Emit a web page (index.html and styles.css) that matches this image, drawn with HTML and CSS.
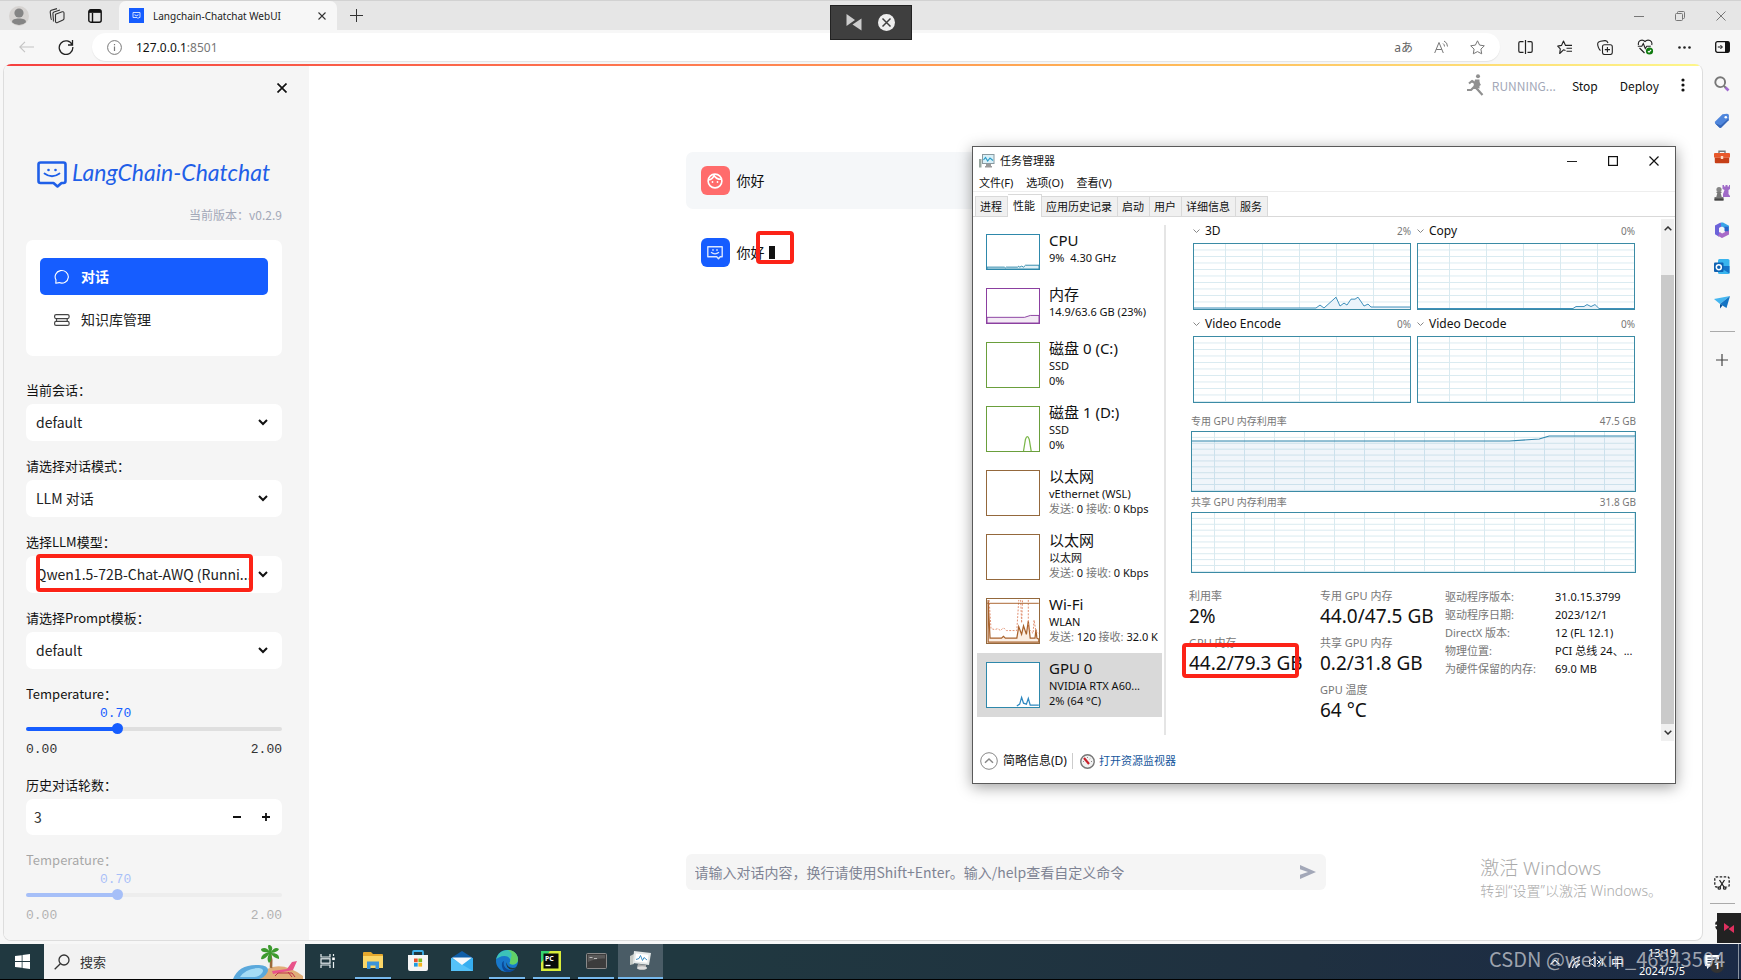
FILE: index.html
```html
<!DOCTYPE html>
<html lang="zh-CN">
<head>
<meta charset="utf-8">
<title>Langchain-Chatchat WebUI</title>
<link rel="stylesheet" href="styles.css">
</head>
<body>
<div class="desktop">
  <header class="tabbar">
    <button class="icon-btn tool-slot" aria-label="Profile"><svg width="20" height="20" viewBox="0 0 20 20"><circle cx="10" cy="10" r="10" fill="#d6d3d1"/><circle cx="10" cy="7" r="4.6" fill="#858585"/><path d="M3 16.2c0-3 3-3.7 7-3.7s7 .7 7 3.7a10 10 0 0 1-14 0z" fill="#858585"/></svg></button>
    <button class="icon-btn tool-slot" aria-label="Workspaces"><svg width="16" height="16" viewBox="0 0 16 16" fill="none" stroke="#333" stroke-width="1.1" stroke-linejoin="round"><path d="M6.5 6.2 13.2 3.8c1-.3 1.8.2 1.8 1.200v5.600c0 .7-.3 1.200-1 1.500L8.500 14.600c-1 .4-2-.1-2-1.100z"/><path d="M4.500 12.600 3.900 5.600c0-.8.4-1.300 1.100-1.600L11 1.900M2 10.800 1.200 3.900c0-.8.4-1.300 1.100-1.600L8 .6M5 13.200l-1-.6M2.700 11.600 2 10.800"/></svg></button>
    <button class="icon-btn tool-slot" aria-label="Tab actions"><svg width="14" height="14" viewBox="0 0 14 14" fill="none" stroke="#111" stroke-width="1.4"><rect x=".8" y=".8" width="12.400" height="12.400" rx="2"/><path d="M1 2.500h12M4.500 4v9"/><path d="M1 2.300h12" stroke-width="3"/></svg></button>
    <div class="tab">
      <svg width="15" height="15" viewBox="0 0 15 15"><rect width="15" height="15" fill="#165dff"/><path d="M4 4.500h7v5H9.800l-.8 1-.8-1H4z" fill="none" stroke="#cfe0ff"/><path d="M5.500 6.800q2 1.800 4 0" fill="none" stroke="#fff" stroke-width=".9"/></svg>
      <span class="tab-title">Langchain-Chatchat WebUI</span>
      <button class="icon-btn" aria-label="Close tab"><svg width="8" height="8" viewBox="0 0 8 8" stroke="#333" stroke-width="1.100"><path d="M.5.500l7 7M7.500.500l-7 7"/></svg></button>
    </div>
    <button class="icon-btn new-tab" aria-label="New tab"><svg width="13" height="13" viewBox="0 0 13 13" stroke="#333"><path d="M6.500 0v13M0 6.500h13"/></svg></button>
    <div class="win-controls">
      <button class="icon-btn" aria-label="Minimize"><svg width="10" height="10" viewBox="0 0 10 10" stroke="#777"><path d="M0 5.500h10"/></svg></button>
      <button class="icon-btn" aria-label="Restore"><svg width="10" height="10" viewBox="0 0 10 10" fill="none" stroke="#777"><rect x=".5" y="2.500" width="7" height="7" rx="1"/><path d="M2.500 2.500v-1q0-1 1-1h5q1 0 1 1v5q0 1-1 1h-1"/></svg></button>
      <button class="icon-btn" aria-label="Close"><svg width="10" height="10" viewBox="0 0 10 10" stroke="#777"><path d="M.5.500l9 9M9.500.500l-9 9"/></svg></button>
    </div>
  </header>

  <div class="float-bar">
    <button class="icon-btn" aria-label="Remote"><svg width="16" height="17" viewBox="0 0 16 17" fill="#ccc"><path d="M.5 0v12L9 6z"/><path d="M15.500 4.500v12L6.500 10.500z"/></svg></button>
    <button class="icon-btn" aria-label="Disconnect"><svg width="17" height="17" viewBox="0 0 17 17"><circle cx="8.500" cy="8.500" r="8.500" fill="#eee"/><path d="M4.500 4.500l8 8M12.500 4.500l-8 8" stroke="#3f3f3f" stroke-width="1.500"/></svg></button>
  </div>

  <nav class="toolbar">
    <button class="icon-btn nav-slot" aria-label="Back"><svg width="15" height="12" viewBox="0 0 15 12" fill="none" stroke="#c4c4c4" stroke-width="1.100"><path d="M15 6H1M6 .8.800 6 6 11.200"/></svg></button>
    <button class="icon-btn nav-slot" aria-label="Reload"><svg width="16" height="16" viewBox="0 0 16 16" fill="none" stroke="#222" stroke-width="1.300"><path d="M14.300 6A6.800 6.800 0 1 0 14.800 8M14.500 1v5H10"/></svg></button>
    <div class="address">
      <svg width="15" height="15" viewBox="0 0 15 15" fill="none" stroke="#777"><circle cx="7.500" cy="7.500" r="6.900"/><path d="M7.500 6.500v4.500M7.500 4v1.300" stroke-width="1.200"/></svg>
      <span class="url">127.0.0.1<span class="port">:8501</span></span>
      <span class="address-actions">
        <span class="translate">aあ</span>
        <svg width="15" height="14" viewBox="0 0 15 14" fill="none" stroke="#777"><path d="M.7 13 5 2.500 9.300 13M2.200 9.500h5.600M9 3.500q1.500 1 1.500 3M10 1q3.500 1.500 3.500 5.500" /></svg>
        <svg width="15" height="15" viewBox="0 0 15 15" fill="none" stroke="#777" stroke-linejoin="round"><path d="M7.500.8l2.100 4.300 4.700.7-3.400 3.300.8 4.700-4.200-2.200-4.200 2.200.8-4.700L.7 5.800l4.700-.7z"/></svg>
      </span>
    </div>
    <div class="tool-icons">
      <svg width="15" height="14" viewBox="0 0 15 14" fill="none" stroke="#222" stroke-width="1.200"><path d="M5.500 1.600H2.200Q.8 1.600.8 3v8q0 1.400 1.400 1.400h3.300M9.500 1.600h3.300q1.400 0 1.400 1.400v8q0 1.400-1.400 1.400H9.500M7.500 0v14"/></svg>
      <svg width="16" height="15" viewBox="0 0 16 15" fill="none" stroke="#222" stroke-width="1.100" stroke-linejoin="round"><path d="M8.500 10.500 6.500 9.800l-3.800 3.700.6-4.600L.7 6.100l3.800-.7L6.500 1l2 4.400H15M9.500 8.300H15M9.500 11.200H15"/></svg>
      <svg width="16" height="15" viewBox="0 0 16 15" fill="none" stroke="#222" stroke-width="1.100"><rect x="5.500" y="4.800" width="9.800" height="9.700" rx="2"/><path d="M10.400 7v5.200M7.800 9.600H13M3.500 10.500C1.800 9.500.500 5.500.7 3.400.8 2 2 1.500 3.500 1.200L8 .6c1.800-.1 2.500.7 3 2.400"/></svg>
      <svg width="17" height="16" viewBox="0 0 17 16" fill="none" stroke="#222" stroke-width="1.100"><path d="M1.500 6C.5 1.800 5-.4 8 2.500 11-.4 16 1.800 14.700 6M2.500 9l5 5M.8 7.300h4l1.500-2.800 2 5 1.500-2.200h4"/><circle cx="12.500" cy="12" r="3.600" fill="#0f7b0f" stroke="none"/><path d="M10.900 12l1.100 1.200 2.100-2.400" stroke="#fff"/></svg>
      <svg width="13" height="3" viewBox="0 0 13 3" fill="#222"><circle cx="1.500" cy="1.500" r="1.300"/><circle cx="6.500" cy="1.500" r="1.300"/><circle cx="11.500" cy="1.500" r="1.300"/></svg>
      <svg width="15" height="12" viewBox="0 0 15 12"><rect x=".7" y=".7" width="13.600" height="10.600" rx="1.800" fill="none" stroke="#111" stroke-width="1.300"/><path d="M10 .5h3q1.500 0 1.500 1.500v8q0 1.500-1.500 1.500h-3z" fill="#111"/><path d="M2.800 6h4.400M5.400 4l2 2-2 2" fill="none" stroke="#111"/></svg>
    </div>
  </nav>

  <div class="workspace">
    <div class="page">
      <aside class="sidebar">
        <div class="sidebar-close"><button class="icon-btn" aria-label="Close sidebar"><svg width="10" height="10" viewBox="0 0 10 10" stroke="#111" stroke-width="1.700"><path d="M.5.500l9 9M9.500.500l-9 9"/></svg></button></div>
        <div class="logo">
          <svg width="30" height="27" viewBox="0 0 30 27" fill="none" stroke="#1f5fe8" stroke-width="2.600" stroke-linejoin="round"><path d="M3.500 1.500h23q2 0 2 2V20q0 2-2 2h-2l-4 3.500-4-3.500H3.500q-2 0-2-2V3.500q0-2 2-2z"/><path d="M7.500 12.500q7.500 5.500 15 0" stroke-width="1.800" stroke-linecap="round"/><circle cx="11.500" cy="9" r="1.300" fill="#1f5fe8" stroke="none"/><circle cx="18.500" cy="9" r="1.300" fill="#1f5fe8" stroke="none"/></svg>
          <span class="logo-text">LangChain-Chatchat</span>
        </div>
        <p class="version">当前版本：v0.2.9</p>
        <div class="menu-card">
          <button class="menu-item active"><svg width="16" height="16" viewBox="0 0 16 16" fill="none" stroke="#fff" stroke-width="1.100"><path d="M1.800 14.300 2 10.900a6.600 6.300 0 1 1 3.200 2.700z" stroke-linejoin="round"/></svg><span>对话</span></button>
          <button class="menu-item"><svg width="16" height="12" viewBox="0 0 16 12" fill="none" stroke="#444" stroke-width="1.200"><rect x=".6" y=".6" width="14.500" height="4" rx="1.500"/><rect x=".6" y="7.400" width="14.500" height="4" rx="1.500"/><path d="M2.500 4.600v2.800M13.200 4.600v2.800"/></svg><span>知识库管理</span></button>
        </div>
        <div class="fields">
          <div class="field"><label for="s1">当前会话：</label><div class="select"><select id="s1"><option>default</option></select><svg width="10" height="7" viewBox="0 0 10 7"><path d="M1 1l4 4 4-4" fill="none" stroke="#111" stroke-width="2"/></svg></div></div>
          <div class="field"><label for="s2">请选择对话模式：</label><div class="select"><select id="s2"><option>LLM 对话</option></select><svg width="10" height="7" viewBox="0 0 10 7"><path d="M1 1l4 4 4-4" fill="none" stroke="#111" stroke-width="2"/></svg></div></div>
          <div class="field"><label for="s3">选择LLM模型：</label><div class="select"><select id="s3"><option>Qwen1.5-72B-Chat-AWQ (Runni...</option></select><svg width="10" height="7" viewBox="0 0 10 7"><path d="M1 1l4 4 4-4" fill="none" stroke="#111" stroke-width="2"/></svg><span class="mark mark-model"></span></div></div>
          <div class="field"><label for="s4">请选择Prompt模板：</label><div class="select"><select id="s4"><option>default</option></select><svg width="10" height="7" viewBox="0 0 10 7"><path d="M1 1l4 4 4-4" fill="none" stroke="#111" stroke-width="2"/></svg></div></div>
          <div class="field"><label for="r1">Temperature：</label><output class="slider-value" for="r1">0.70</output><input id="r1" type="range" min="0" max="2" step="0.01" value="0.7"><div class="ticks"><span>0.00</span><span>2.00</span></div></div>
          <div class="field"><label for="n1">历史对话轮数：</label><div class="number"><input id="n1" type="text" value="3"><button class="icon-btn" aria-label="Decrease"><svg width="8" height="8" viewBox="0 0 8 8" stroke="#111" stroke-width="1.800"><path d="M0 4h8"/></svg></button><button class="icon-btn" aria-label="Increase"><svg width="8" height="8" viewBox="0 0 8 8" stroke="#111" stroke-width="1.800"><path d="M0 4h8M4 0v8"/></svg></button></div></div>
          <div class="field stale"><label for="r2">Temperature：</label><output class="slider-value" for="r2">0.70</output><input id="r2" type="range" min="0" max="2" step="0.01" value="0.7"><div class="ticks"><span>0.00</span><span>2.00</span></div></div>
        </div>
      </aside>

      <main class="main">
        <div class="status">
          <svg width="17" height="22" viewBox="0 0 17 22" fill="none" stroke="#909090" stroke-width="2.200"><circle cx="11" cy="2.300" r="2" fill="#909090" stroke="none"/><path d="M10.500 7 13 11.500M2 9.500 5 7l7 5M7 13l-3 3H0M7 12l6 6M11 16l4.500 5" stroke-linejoin="round"/><path d="M8 5.500h4.500v9L6 14z" fill="#909090" stroke="none"/></svg>
          <span class="running">RUNNING...</span>
          <button class="text-btn">Stop</button>
          <button class="text-btn">Deploy</button>
          <button class="icon-btn" aria-label="Menu"><svg width="4" height="14" viewBox="0 0 4 14" fill="#111"><circle cx="2" cy="2" r="1.600"/><circle cx="2" cy="7" r="1.600"/><circle cx="2" cy="12" r="1.600"/></svg></button>
        </div>
        <div class="chat">
          <div class="message user">
            <span class="avatar"><svg width="16" height="16" viewBox="0 0 16 16" fill="none" stroke="#fff" stroke-width="1.600"><circle cx="8" cy="8" r="6.900"/><path d="M1.500 7Q5.500 6.500 7 2.500q2.500 4 7.500 3.800"/><circle cx="5.500" cy="9" r=".9" fill="#fff" stroke="none"/><circle cx="10.500" cy="9" r=".9" fill="#fff" stroke="none"/></svg></span>
            <p>你好</p>
          </div>
          <div class="message bot">
            <span class="avatar"><svg width="16" height="14" viewBox="0 0 16 14" fill="none" stroke="#dbe7ff" stroke-width="1.400" stroke-linejoin="round"><path d="M.8.800h14.400v10h-2l-1.700 2-1.800-2H.800z"/><path d="M4 6.300q4 3 8 0" stroke-width="1.300"/><path d="M5.200 4h1.600M9.200 4h1.600"/></svg></span>
            <p>你好<span class="caret"></span><span class="mark mark-reply"></span></p>
          </div>
        </div>
        <form class="composer">
          <input type="text" aria-label="对话" placeholder="请输入对话内容，换行请使用Shift+Enter。输入/help查看自定义命令">
          <button class="icon-btn" type="button" aria-label="Send"><svg width="16" height="14" viewBox="0 0 16 14" fill="#a3a8b8"><path d="M0 0 16 7 0 14V9.800L8 7 0 4.200z"/></svg></button>
        </form>
        <div class="activate"><p class="activate-title">激活 Windows</p><p>转到“设置”以激活 Windows。</p></div>
      </main>
    </div>

    <aside class="edge-bar">
      <svg width="16" height="16" viewBox="0 0 16 16" fill="none"><circle cx="6.200" cy="6.200" r="4.900" stroke="#777" stroke-width="1.900"/><path d="M10 10l2 2" stroke="#777" stroke-width="2"/><path d="M11.500 11.500l3 3" stroke="#a06bd0" stroke-width="2.600"/></svg>
      <svg width="16" height="16" viewBox="0 0 16 16"><path d="M8.500 1.200 13 .8q2 0 2 2l-.4 4.500-7.300 7.300q-1 .8-2 0L1.200 10.500q-.8-1 0-2z" fill="#4f86dc"/><path d="M1.200 10.500l4.100 4.100q1 .8 2 0l7.300-7.300.2-2-8 7z" fill="#3767b8"/><circle cx="11.800" cy="4.200" r="1.300" fill="#fff"/></svg>
      <svg width="16" height="14" viewBox="0 0 16 14"><path d="M5 3V1.200h6V3" fill="none" stroke="#777" stroke-width="1.400"/><rect y="3" width="16" height="4.800" rx="1" fill="#e8582a"/><path d="M.8 7.800h14.400v4.500q0 1-1 1H1.800q-1 0-1-1z" fill="#c63f17"/><rect x="6.800" y="6" width="2.400" height="3" fill="#ffd9c0"/></svg>
      <svg width="16" height="16" viewBox="0 0 16 16"><path d="M8.500 0H10v1.500h1.500V0h2v1.500H15V0h1v4l-1.500 1v4l1.500 2v1H9V9l1.500-4-2-1z" fill="#a06bc8"/><circle cx="5" cy="4.500" r="2.600" fill="#858585"/><path d="M2.500 6.800h5V8H6.700l1 4H9.500v3.500H.5V12h1.800l1-4h-.8z" fill="#777"/><path d="M.5 13.500h9v2h-9z" fill="#444"/></svg>
      <svg width="16" height="16" viewBox="0 0 16 16" fill="none" stroke-width="4"><path d="M7.500 2.300 3 4.800v6.400l3 1.800" stroke="#6c63d9"/><path d="M7 2.400h1.500L13 5v4" stroke="#3aa5e8"/><path d="M13 8v3.200l-5 2.600-3-1.700" stroke="#a86ac8"/><path d="M12.500 4.700v4.500" stroke="#2c62c8"/></svg>
      <svg width="16" height="16" viewBox="0 0 16 16"><rect x="4" width="11.500" height="15" rx="1.500" fill="#38b4ee"/><path d="M4 7h11.500v7.500L10 11z" fill="#1474c8"/><rect y="3.500" width="9.500" height="9.500" rx="1" fill="#0f62b2"/><circle cx="4.800" cy="8.200" r="2.500" fill="none" stroke="#fff" stroke-width="1.500"/></svg>
      <svg width="16" height="13" viewBox="0 0 16 13"><path d="M0 3 16 0 6 8z" fill="#45b6f0"/><path d="M16 0 12.500 12 6 8z" fill="#1474c4"/><path d="M6 8v4.500L8.500 9.500z" fill="#0b4f94"/></svg>
      <hr>
      <button class="icon-btn" aria-label="Customize"><svg width="12" height="12" viewBox="0 0 12 12" stroke="#444" stroke-width="1.200"><path d="M6 0v12M0 6h12"/></svg></button>
      <span class="edge-bottom">
        <svg width="16" height="14" viewBox="0 0 16 14" fill="none" stroke="#222" stroke-width="1.300"><path d="M3.500 11H3Q.8 11 .8 9V3Q.8.800 3 .8h10q2.200 0 2.200 2.200v6q0 2-2.200 2h-.5" stroke-dasharray="2.500 1.500"/><path d="M5.500 4l4.500 7M10.500 4 6 11"/><circle cx="5.300" cy="12" r="1.200"/><circle cx="10.700" cy="12" r="1.200"/></svg>
        <hr>
        <svg width="16" height="16" viewBox="0 0 16 16" fill="none" stroke="#222"><circle cx="8" cy="8" r="6" stroke-width="2" stroke-dasharray="3 1.700"/><circle cx="8" cy="8" r="2.500"/></svg>
      </span>
      <span class="remote-badge"><svg width="10" height="10" viewBox="0 0 10 10" fill="#e0305f"><path d="M0 0v8l5.500-4z"/><path d="M10 2v8L4.500 6z"/></svg></span>
    </aside>
  </div>

  <section class="taskman" aria-label="任务管理器">
    <header class="tm-title">
      <svg width="16" height="14" viewBox="0 0 16 14"><rect x="3.500" y=".5" width="11.500" height="9" fill="#d8f0f8" stroke="#8a9aa0"/><path d="M4.500 6l2-2.500 2.200 3.500L11 4l3 2.500" fill="none" stroke="#2a9cc8" stroke-width="1.200"/><path d="M7 10h5v2H7zM6 12h7v1.500H6z" fill="#9a9a9a"/><path d="M0 5h2.500v8.500H0z" fill="#99a8a0"/></svg>
      <h1>任务管理器</h1>
      <div class="tm-controls">
        <button class="icon-btn" aria-label="Minimize"><svg width="10" height="10" viewBox="0 0 10 10" stroke="#222"><path d="M0 5.500h10"/></svg></button>
        <button class="icon-btn" aria-label="Maximize"><svg width="10" height="10" viewBox="0 0 10 10" fill="none" stroke="#111" stroke-width="1.200"><rect x=".6" y=".6" width="8.800" height="8.800"/></svg></button>
        <button class="icon-btn" aria-label="Close"><svg width="10" height="10" viewBox="0 0 10 10" stroke="#111" stroke-width="1.200"><path d="M.5.500l9 9M9.500.500l-9 9"/></svg></button>
      </div>
    </header>
    <div class="tm-menu"><button>文件(F)</button><button>选项(O)</button><button>查看(V)</button></div>
    <div class="tm-tabs"><button>进程</button><button class="current">性能</button><button>应用历史记录</button><button>启动</button><button>用户</button><button>详细信息</button><button>服务</button></div>
    <div class="tm-body">
      <ul class="tm-list">
        <li class="short"><svg class="thumb cpu" viewBox="0 0 54 36" preserveAspectRatio="none"><path d="M0 34H18l1 1 1-1h12l1-1 1 1 2-1 2 1 2-2h14v4H0z" fill="#e3f1f7" stroke="#2e88ab"/></svg><div><h2>CPU</h2><p>9% &nbsp;4.30 GHz</p></div></li>
        <li class="short"><svg class="thumb mem" viewBox="0 0 54 36" preserveAspectRatio="none"><path d="M0 30H39l6-2h9v8H0z" fill="#f3eaf5" stroke="#8b3fa0"/></svg><div><h2>内存</h2><p>14.9/63.6 GB (23%)</p></div></li>
        <li><svg class="thumb disk" viewBox="0 0 54 46"></svg><div><h2>磁盘 0 (C:)</h2><p>SSD</p><p>0%</p></div></li>
        <li><svg class="thumb disk" viewBox="0 0 54 46"><path d="M38 46l2-12q2-6 4 0l2 12" fill="none" stroke="#7ab648" stroke-width="1.300"/></svg><div><h2>磁盘 1 (D:)</h2><p>SSD</p><p>0%</p></div></li>
        <li><svg class="thumb net" viewBox="0 0 54 46"></svg><div><h2>以太网</h2><p>vEthernet (WSL)</p><p><span class="dim">发送:</span> 0 <span class="dim">接收:</span> 0 Kbps</p></div></li>
        <li><svg class="thumb net" viewBox="0 0 54 46"></svg><div><h2>以太网</h2><p>以太网</p><p><span class="dim">发送:</span> 0 <span class="dim">接收:</span> 0 Kbps</p></div></li>
        <li><svg class="thumb net" viewBox="0 0 54 46" fill="none"><path d="M1 1l2 40h12l2-2 2 2h12l2-12 3 8 2-9 3 9 2-14 2 18h5l1-9 1 9 2 1v3H1z" fill="#fbeee3" stroke="#a8622c" stroke-width="1.300"/><path d="M2 1l2 30 4 1 3-1 3 2 3-3 3 3h11L33 1M35 1l1 24L37 1M43 1v30l5 5 1-14 2 12 3 2" stroke="#e08a6a" stroke-dasharray="2 1.500"/><path d="M0 4.500h54" stroke="#a8622c"/></svg><div><h2>Wi-Fi</h2><p>WLAN</p><p><span class="dim">发送:</span> 120 <span class="dim">接收:</span> 32.0 K</p></div></li>
        <li class="selected"><svg class="thumb cpu" viewBox="0 0 54 46"><path d="M31 45l3-2 2-7 2 6 3 1 2-6 2 7h9" fill="none" stroke="#2e88c0" stroke-width="1.300"/></svg><div><h2>GPU 0</h2><p>NVIDIA RTX A60...</p><p>2% (64 °C)</p></div></li>
      </ul>
      <div class="tm-detail">
        <div class="engines">
          <div class="engine"><button class="engine-name"><svg width="7" height="4" viewBox="0 0 7 4"><path d="M.5.500l3 3 3-3" fill="none" stroke="#888"/></svg>3D</button><span class="pct">2%</span><div class="graph"><svg viewBox="0 0 216 66" preserveAspectRatio="none"><path d="M-1 65H122l4-3 4 3L142 54l4 9 4-3 3 2 4-6h4l3-2 6 9 4-2 3 3H217V67H-1z" fill="#eaf3fa" stroke="#3d8fba"/></svg></div></div>
          <div class="engine"><button class="engine-name"><svg width="7" height="4" viewBox="0 0 7 4"><path d="M.5.500l3 3 3-3" fill="none" stroke="#888"/></svg>Copy</button><span class="pct">0%</span><div class="graph"><svg viewBox="0 0 216 66" preserveAspectRatio="none"><path d="M0 65.500h155l3-2h8l3-2 4 2 4-2 4 4h35" fill="#eaf3fa" stroke="#3d8fba"/></svg></div></div>
          <div class="engine"><button class="engine-name"><svg width="7" height="4" viewBox="0 0 7 4"><path d="M.5.500l3 3 3-3" fill="none" stroke="#888"/></svg>Video Encode</button><span class="pct">0%</span><div class="graph"></div></div>
          <div class="engine"><button class="engine-name"><svg width="7" height="4" viewBox="0 0 7 4"><path d="M.5.500l3 3 3-3" fill="none" stroke="#888"/></svg>Video Decode</button><span class="pct">0%</span><div class="graph"></div></div>
        </div>
        <div class="memory">
          <div class="mem-head"><span>专用 GPU 内存利用率</span><span>47.5 GB</span></div>
          <div class="graph wide"><svg viewBox="0 0 444 59" preserveAspectRatio="none"><path d="M-1 9H318l30-2 10-3h87v60H-1z" fill="rgba(40,120,190,.07)" stroke="#2f86ac" stroke-width="1.200"/></svg></div>
          <div class="mem-head"><span>共享 GPU 内存利用率</span><span>31.8 GB</span></div>
          <div class="graph wide"></div>
        </div>
        <div class="stats">
          <dl class="big"><dt>利用率</dt><dd>2%</dd><dt>GPU 内存</dt><dd>44.2/79.3 GB<span class="mark mark-mem"></span></dd></dl>
          <dl class="big"><dt>专用 GPU 内存</dt><dd>44.0/47.5 GB</dd><dt>共享 GPU 内存</dt><dd>0.2/31.8 GB</dd><dt>GPU 温度</dt><dd>64 °C</dd></dl>
          <table class="props"><tbody>
            <tr><th>驱动程序版本:</th><td>31.0.15.3799</td></tr>
            <tr><th>驱动程序日期:</th><td>2023/12/1</td></tr>
            <tr><th>DirectX 版本:</th><td>12 (FL 12.1)</td></tr>
            <tr><th>物理位置:</th><td>PCI 总线 24、...</td></tr>
            <tr><th>为硬件保留的内存:</th><td>69.0 MB</td></tr>
          </tbody></table>
        </div>
      </div>
      <div class="scroll"><svg width="8" height="5" viewBox="0 0 8 5"><path d="M.7 4.300 4 1l3.300 3.300" fill="none" stroke="#333" stroke-width="1.500"/></svg><span class="scroll-thumb"></span><svg width="8" height="5" viewBox="0 0 8 5"><path d="M.7.700 4 4 7.300.700" fill="none" stroke="#333" stroke-width="1.500"/></svg></div>
    </div>
    <footer class="tm-foot">
      <button class="brief"><svg width="18" height="18" viewBox="0 0 18 18" fill="none" stroke="#888"><circle cx="9" cy="9" r="8.300"/><path d="M5 10.800 9 7l4 3.800" stroke-width="1.500"/></svg>简略信息(D)</button>
      <a href="#"><svg width="15" height="15" viewBox="0 0 15 15"><circle cx="7.500" cy="7.500" r="6.700" fill="#f2f2f2" stroke="#777" stroke-width="1.400"/><path d="M4 4l5 6" stroke="#c8202a" stroke-width="2.200"/><path d="M3 7.500h1M7.500 3v1M11 7.500h1M10.300 4.500l-.7.700" stroke="#888"/></svg>打开资源监视器</a>
    </footer>
  </section>

  <footer class="taskbar">
    <button class="start" aria-label="Start"><svg width="15" height="15" viewBox="0 0 15 15" fill="#fff"><path d="M0 2.100 6.700 1.200v5.900H0zM7.500 1.100 15 0v7.100H7.500zM0 7.900h6.700v5.900L0 12.900zM7.500 7.900H15V15l-7.500-1.100z"/></svg></button>
    <button class="search"><svg width="16" height="16" viewBox="0 0 16 16" fill="none" stroke="#333" stroke-width="1.300"><circle cx="10" cy="6" r="5"/><path d="M6.300 9.700.700 15.300"/></svg><span>搜索</span>
      <svg class="beach" width="70" height="34" viewBox="0 0 70 34"><path d="M22 34Q42 10 70 31v3z" fill="#e0ae78"/><path d="M0 34Q6 19 26 20q12 1 8 8-3 5-8 6z" fill="#5ba9dc"/><path d="M7 32q6-9 19-9 6 1 3 5-3 4-8 4z" fill="#a5dcf5"/><path d="M38 23q1-8-1-15" stroke="#9a6a3a" stroke-width="2.600" fill="none"/><path d="M37 8Q33-1 37 0q4 2 1 7 4-6 8-3-1 3-8 4 9 0 8 6-5-1-8-5 2 6-2 9-3-4 0-9-4 6-8 5 0-5 8-7-8 1-8-3 5-3 9 3z" fill="#3d9a2e"/><path d="M39 26l15-2 5-7 5-1-4 9-20 4z" fill="#e8538a"/><path d="M42 31l3-3 14 0 3 4M55 27l4 5" stroke="#c0304a" fill="none"/></svg>
    </button>
    <div class="apps">
    <button class="app" aria-label="Task view"><svg width="16" height="14" viewBox="0 0 16 14" fill="none" stroke="#e8eef0" stroke-width="1.200"><path d="M1 0v3h9V0M1 14v-3h9v3"/><rect x="1" y="4.800" width="9" height="4.400"/><path d="M13.500 0v2M13.500 8v6"/><path d="M12.200 3.500h2.600v2.600h-2.600z" fill="#fff" stroke="none"/></svg></button>
    <button class="app open" aria-label="Explorer"><svg width="20" height="17" viewBox="0 0 20 17"><path d="M0 1q0-1 1-1h7l2 2h9q1 0 1 1v12q0 1-1 1H1q-1 0-1-1z" fill="#e5a82d"/><path d="M0 4h20v12H0z" fill="#fbd667"/><path d="M4 9.500h12V17h-3.500v-3.500h-5V17H4z" fill="#3d94d8"/></svg></button>
    <button class="app" aria-label="Store"><svg width="22" height="22" viewBox="0 0 22 22"><path d="M6 6V2q0-1 1-1h8q1 0 1 1v4" fill="none" stroke="#3eb0ea" stroke-width="1.800"/><path d="M1 5h20v14q0 2-2 2H3q-2 0-2-2z" fill="#f5f5f5"/><path d="M7 8.500h3.700v3.700H7z" fill="#e8502a"/><path d="M11.400 8.500h3.700v3.700h-3.700z" fill="#7ab822"/><path d="M7 12.900h3.700v3.700H7z" fill="#1e9be0"/><path d="M11.400 12.900h3.700v3.700h-3.700z" fill="#f5b41e"/></svg></button>
    <button class="app" aria-label="Mail"><svg width="22" height="20" viewBox="0 0 22 20"><path d="M0 7 11 0l11 7z" fill="#0f5ea8"/><path d="M0 7h22v13H0z" fill="#36aef0"/><path d="M0 7v13h22z" fill="#55c2f8"/><path d="M1 6.500h20L11 14z" fill="#f4f8fb"/></svg></button>
    <button class="app open" aria-label="Edge"><svg width="22" height="22" viewBox="0 0 22 22"><circle cx="11" cy="11" r="11" fill="#1878ca"/><path d="M.2 9.500C1.500 3.500 6 0 11.500 0 18 0 22 4.500 22 9.500c0 3-2.500 5-5.500 5-2.500 0-3.500-1-2.500-2.500C15.500 8.500 12 6 8.500 6 4.500 6 1.500 8 .2 9.500z" fill="#3cc3b8"/><path d="M12 0c6 0 10 4.500 10 9.500 0 3-2.500 5-5.500 5-2.500 0-3.500-1-2.500-2.500C15 6 18 4 12 0z" fill="#62d066"/><path d="M8 11c-1.500 5 2 9 7 9 2 0 4-1 5-2-2 3-5 4-9 4C6 22 4 12 8 11z" fill="#0c4a98"/><path d="M20.500 17.300c-5 2.200-10.500-.5-9.500-5.300-2 4 1.500 8 6 7.500q2-.5 3.500-2.200z" fill="#203840"/></svg></button>
    <button class="app open" aria-label="PyCharm"><svg width="20" height="20" viewBox="0 0 20 20"><rect width="20" height="20" fill="#d9ec3a"/><path d="M0 0h9L0 12z" fill="#35d46f"/><rect x="2.500" y="2.500" width="15" height="15" fill="#0a0a0a"/><text x="4" y="10" class="pc">PC</text><path d="M4.500 14.500h5" stroke="#fff" stroke-width="1.300"/></svg></button>
    <button class="app open" aria-label="Terminal"><svg width="21" height="16" viewBox="0 0 21 16"><rect x=".5" y=".5" width="20" height="15" rx="1" fill="#3c3c3c" stroke="#8a8a8a"/><path d="M2 2h17v3.500Q10 5 2 9z" fill="#5a5a5a"/><path d="M3.500 4.500h3M8 5.500h3" stroke="#bbb"/></svg></button>
    <button class="app open focused" aria-label="Task Manager"><svg width="21" height="19" viewBox="0 0 21 19"><path d="M0 5l4-2v10l-4 1z" fill="#c4c8c4"/><path d="M4 0l17 2-2 12L3 12z" fill="#e4e8e8"/><path d="M6 2.500l12.500 1.300-1.300 8L5 10.300z" fill="#fff"/><path d="M6 8.500l3-1 1.500-3 2 5 1.500-3 3 2.500" stroke="#3b8fc4" fill="none"/><path d="M8 13l8 1v2H7z" fill="#aaa"/><ellipse cx="12" cy="17" rx="5" ry="1.800" fill="#ddd"/></svg></button>
    </div>
    <div class="tray">
      <svg width="10" height="6" viewBox="0 0 10 6" fill="none" stroke="#fff" stroke-width="1.200"><path d="M.5 5.500 5 1l4.500 4.500"/></svg>
      <svg width="13" height="12" viewBox="0 0 13 12" fill="none" stroke="#fff" stroke-width="1.200"><path d="M1 12Q2 3 12 1M4.500 12Q5 6 12 4.500M8 12q.5-3 4-3.800"/></svg>
      <svg width="14" height="12" viewBox="0 0 14 12" fill="none" stroke="#fff"><path d="M.5 4h2.500l3-3v10L3 8H.5zM8 4l4 4M12 4 8 8M13 2q1.500 4 0 8"/></svg>
      <span class="ime">中</span>
      <div class="clock"><span>13:19</span><span>2024/5/5</span></div>
      <span class="notice"><svg width="16" height="14" viewBox="0 0 16 14"><path d="M1 0h14v11H6l-3 3v-3H1z" fill="#fff"/><path d="M3.500 3h9M3.500 5.500h9M3.500 8h9" stroke="#1b2a44"/></svg><b>1</b></span>
      <span class="watermark">CSDN @weixin_46943504</span>
    </div>
  </footer>
</div>
</body>
</html>
```
FILE: styles.css
```css
* { box-sizing: border-box; }
body { margin: 0; font-family: "Noto Sans", "Noto Sans CJK SC", sans-serif; color: #111; }
p, h1, h2, ul, dl, dd { margin: 0; padding: 0; font-weight: 400; }
button, input, select { font: inherit; color: inherit; border: 0; background: none; padding: 0; margin: 0; }
svg { display: block; flex: none; }
.icon-btn { display: grid; place-items: center; }

.desktop { position: relative; display: flex; flex-direction: column; min-height: 100vh; background: #f7f7f7; overflow: hidden; }

.tabbar { display: flex; align-items: center; height: 30px; background: #e6e6e6; border-top: 1px solid #d2d2d2; }
.tool-slot { width: 38px; height: 30px; }
.tab { display: flex; align-items: center; gap: 9px; width: 218px; height: 29px; margin-left: 5px; padding: 0 11px 0 10px; background: #f7f7f7; border-radius: 7px 7px 0 0; }
.tab-title { flex: 1; font-size: 10px; line-height: 18px; color: #222; white-space: nowrap; }
.new-tab { width: 38px; height: 30px; }
.win-controls { display: flex; margin-left: auto; }
.win-controls button { width: 41px; height: 29px; }

.float-bar { position: absolute; z-index: 5; top: 5px; left: 50%; transform: translateX(-50%); display: flex; justify-content: center; gap: 16px; width: 82px; height: 35px; background: #3f3f3f; border: 1px solid #222; }

.toolbar { display: flex; align-items: center; height: 34px; padding: 0 11px 0 6px; }
.nav-slot { width: 40px; height: 34px; }
.address { display: flex; align-items: center; flex: 1; gap: 14px; height: 28px; margin-left: 6px; padding: 0 15px; border-radius: 14px; background: #fff; box-shadow: 0 1px 1px #e4e4e4; }
.url { font-size: 12px; flex: 1; }
.port { color: #777; }
.address-actions { display: flex; align-items: center; gap: 21px; }
.translate { font-size: 12px; color: #666; }
.tool-icons { display: flex; align-items: center; gap: 24px; margin-left: 18px; }

.workspace { display: flex; flex: 1; }
.page { position: relative; display: flex; flex: 1; margin: 0 0 3px 3px; background: #fff; border: 1px solid #ddd; border-top: 0; border-radius: 8px; overflow: hidden; }
.page::before { content: ""; position: absolute; inset: 0 0 auto; height: 2px; background: linear-gradient(90deg, #f5403f, #ff7a50 40%, #ffb454 66%, #fdf68a); z-index: 1; }

.sidebar { width: 305px; padding: 16px 27px 12px 22px; background: #f5f5f5; font-family: "Noto Sans CJK SC", sans-serif; font-size: 14px; }
.sidebar-close { display: flex; justify-content: flex-end; }
.sidebar-close button { width: 10px; height: 16px; margin-right: -5px; }
.logo { display: flex; align-items: center; gap: 5px; height: 32px; margin: 62px 0 0 11px; color: #1f5fe8; }
.logo-text { font: italic 23px/32px Lato, sans-serif; padding-bottom: 4px; white-space: nowrap; }
.version { margin-top: 15px; font-size: 12px; line-height: 20px; text-align: right; color: #a3a8b8; }
.menu-card { display: flex; flex-direction: column; gap: 6px; margin-top: 15px; padding: 18px 14px; background: #fff; border-radius: 7px; }
.menu-item { display: flex; align-items: center; gap: 11px; height: 37px; padding: 0 14px; border-radius: 5px; text-align: left; color: #222; }
.menu-item span { padding-bottom: 2px; }
.menu-item.active { background: #165dff; color: #fff; font-weight: 700; }
.fields { display: flex; flex-direction: column; gap: 15px; margin-top: 24px; }
.field { display: flex; flex-direction: column; }
.field label { font-size: 13px; line-height: 20px; white-space: nowrap; }
.select { position: relative; display: grid; align-items: center; height: 37px; margin-top: 4px; background: #fff; border-radius: 7px; }
.select select, .select > svg { grid-area: 1 / 1; }
.select select { appearance: none; width: 100%; height: 37px; padding: 0 28px 1px 10px; color: #222; }
.select > svg { justify-self: end; margin-right: 14px; pointer-events: none; }
.slider-value { width: 30px; margin: 2px 0 0 74px; font: 13px/16px "Liberation Mono", monospace; color: #165dff; }
.ticks { display: flex; justify-content: space-between; margin-top: 4px; font: 13px/20px "Liberation Mono", monospace; color: #333; }
input[type="range"] { appearance: none; width: 100%; height: 14px; }
input[type="range"]::-webkit-slider-runnable-track { height: 4px; border-radius: 2px; background: linear-gradient(90deg, #165dff 35%, #dfdfdf 35%); }
input[type="range"]::-webkit-slider-thumb { appearance: none; width: 11px; height: 11px; margin-top: -4px; border-radius: 50%; background: #165dff; }
.number { display: flex; align-items: center; height: 36px; margin-top: 4px; padding-right: 2px; background: #fff; border-radius: 7px; }
.number input { flex: 1; min-width: 0; padding-left: 8px; color: #333; }
.number button { width: 29px; height: 35px; }
.stale { opacity: .35; }

.main { position: relative; display: flex; flex: 1; flex-direction: column; padding: 10px 17px 50px; font-family: "Noto Sans CJK SC", sans-serif; font-size: 14px; }
.status { display: flex; align-items: center; justify-content: flex-end; gap: 22px; height: 22px; font-size: 12px; }
.running { margin: 0 -6px 0 -14px; color: #a3a8b8; }
.chat { width: 100%; max-width: 640px; margin: 56px auto 0; }
.message { display: flex; align-items: center; gap: 7px; height: 57px; margin-bottom: 15px; padding: 0 15px; border-radius: 7px; }
.message p { position: relative; padding-bottom: 2px; line-height: 24px; }
.user { background: #f5f7f9; }
.avatar { display: grid; place-items: center; width: 29px; height: 29px; border-radius: 6px; background: #165dff; }
.user .avatar { background: #ff6c6c; }
.caret { display: inline-block; width: 6px; height: 13px; margin-left: 4px; background: #111; vertical-align: -1px; }
.composer { display: flex; align-items: center; width: 100%; max-width: 640px; height: 36px; margin: auto auto 0; padding: 0 10px 0 9px; background: #f5f5f5; border-radius: 6px; }
.composer input { flex: 1; }
.composer input::placeholder { color: #7f8494; opacity: 1; }
.activate { position: absolute; right: 40px; bottom: 39px; font-family: "Noto Sans", "Noto Sans CJK SC", sans-serif; font-size: 14px; line-height: 20px; color: #aaa; }
.activate p { font-weight: 300; }
.activate .activate-title { font-size: 19px; line-height: 26px; }

.mark { position: absolute; border: 4px solid #fc2317; border-radius: 4px; pointer-events: none; }
.mark-model { left: 10px; right: 29px; top: -2px; bottom: 1px; }
.mark-reply { left: 19px; top: -9px; width: 38px; height: 33px; }
.mark-mem { left: -7px; top: -8px; width: 117px; height: 35px; }

.edge-bar { position: relative; display: flex; flex-direction: column; align-items: center; gap: 21px; width: 38px; padding-top: 12px; }
.edge-bar hr { width: 25px; height: 1px; margin: 1px 0; border: 0; background: #aaa; }
.edge-bottom { display: flex; flex-direction: column; align-items: center; gap: 12px; margin-top: auto; padding-bottom: 11px; }
.remote-badge { position: absolute; right: 0; bottom: 1px; display: grid; place-items: center; width: 24px; height: 30px; background: #222; }

.taskman { position: absolute; z-index: 3; left: 972px; top: 146px; width: 704px; display: flex; flex-direction: column; background: #fff; border: 1px solid #5a5a5a; box-shadow: 0 3px 14px rgba(0, 0, 0, .38); font-size: 11px; line-height: 16px; }
.tm-title { display: flex; align-items: center; gap: 5px; height: 27px; padding-left: 6px; }
.tm-title h1 { font-size: 11px; }
.tm-controls { display: flex; margin: 0 1px 0 auto; }
.tm-controls button { width: 41px; height: 27px; }
.tm-menu { display: flex; gap: 13px; height: 18px; padding-left: 6px; border-bottom: 1px solid #eee; white-space: nowrap; }
.tm-tabs { display: flex; align-items: flex-end; height: 25px; padding-left: 2px; border-bottom: 1px solid #d9d9d9; white-space: nowrap; }
.tm-tabs button { height: 20px; padding: 0 5px 0 4px; background: #f0f0f0; border: 1px solid #d9d9d9; border-width: 1px 1px 0 0; }
.tm-tabs button:first-child { border-left-width: 1px; }
.tm-tabs .current { height: 23px; margin-bottom: -1px; padding: 0 6px 0 5px; background: #fff; }
.tm-body { display: flex; height: 524px; }
.tm-list { width: 193px; height: 510px; margin-top: 8px; padding-left: 4px; list-style: none; border-right: 2px solid #e5e5e5; overflow: hidden; }
.tm-list li { display: flex; gap: 9px; height: 64px; padding: 9px 0 0 9px; margin-right: 2px; }
.tm-list .short { height: 54px; }
.tm-list h2 { margin-top: -3px; font-size: 15px; line-height: 19px; }
.tm-list p { line-height: 15px; white-space: nowrap; }
.tm-list .selected { background: #d9d9d9; }
.dim { color: #777; }
.thumb { width: 54px; height: 46px; background: #fff; border: 1px solid; }
.short .thumb { height: 36px; }
.cpu { border-color: #2e88ab; }
.mem { border-color: #8b3fa0; }
.disk { border-color: #6a9f3c; }
.net { border-color: #94683c; }
.tm-detail { flex: 1; padding: 5px 25px 0 25px; }
.engines { display: grid; grid-template-columns: 1fr 1fr; column-gap: 6px; margin: 0 1px 0 2px; }
.engine { display: grid; grid-template-columns: 1fr auto; align-items: center; }
.engine-name { display: flex; align-items: center; gap: 5px; font-size: 12px; line-height: 18px; }
.engine .pct { font-size: 10px; color: #777; }
.engine .graph { grid-column: 1 / 3; margin: 3px 0 5px; height: 67px; }
.graph { border: 1px solid #3b8ba5; background-image: linear-gradient(90deg, #d9eaf0 1px, transparent 1px), linear-gradient(#d9eaf0 1px, transparent 1px); background-size: 37px 100%, 100% 10%; background-position: 31px 0, 0 -1px; }
.graph svg { width: 100%; height: 100%; }
.graph.wide { height: 61px; background-size: 30px 100%, 100% 10%; background-position: 22px 0, 0 -1px; }
.mem-head { display: flex; justify-content: space-between; font-size: 10px; line-height: 20px; color: #777; }
.memory { margin-top: 3px; }
.stats { display: grid; grid-template-columns: 131px 125px 1fr; margin: 15px 0 0 -2px; }
.stats dt { color: #777; line-height: 16px; }
.stats dd { position: relative; margin-bottom: 7px; font-size: 19px; line-height: 24px; white-space: nowrap; }
.props { border-collapse: collapse; align-self: start; line-height: 18px; white-space: nowrap; }
.props th { width: 110px; padding: 0; font-weight: 400; text-align: left; color: #777; }
.props td { padding: 0; }
.scroll { display: flex; flex-direction: column; align-items: center; width: 13px; margin: 2px 1px 0 0; padding: 7px 0 6px; background: #f0f0f0; }
.scroll-thumb { flex: 1; width: 13px; margin: 44px 0 6px; background: #cacaca; }
.tm-foot { display: flex; align-items: center; height: 42px; padding: 0 0 2px 7px; }
.brief { display: flex; align-items: center; gap: 5px; font-size: 12px; padding-right: 5px; }
.tm-foot a { display: flex; align-items: center; gap: 4px; padding-left: 7px; color: #15569c; text-decoration: none; border-left: 1px solid #ccc; }

.taskbar { display: flex; height: 36px; background: linear-gradient(90deg, #203840 40%, #1f3040 75%, #1b2a46); border-bottom: 1px solid #000; color: #fff; font-size: 12px; }
.start { display: grid; place-items: center; width: 44px; }
.search { display: flex; align-items: center; gap: 10px; width: 261px; padding-left: 10px; background: #f2f2f2; color: #333; font-size: 13px; }
.beach { margin: 0 2px 0 auto; align-self: flex-end; }
.apps { display: grid; grid-template-columns: repeat(8, 1fr); width: 357px; margin-left: 1px; }
.app { display: grid; place-items: center; margin: 0 4px; border-bottom: 2px solid transparent; }
.app.open { border-color: #76b9ed; }
.app.focused { margin: 0; background: #4a5c66; }
.pc { font: 700 7px "Noto Sans", sans-serif; fill: #fff; }
.tray { position: relative; display: flex; align-items: center; gap: 8px; margin-left: auto; padding-right: 21px; }
.ime { font-size: 13px; }
.clock { display: flex; flex-direction: column; align-items: center; width: 60px; font-size: 11px; line-height: 18px; }
.notice { position: relative; margin-left: 4px; }
.notice b { position: absolute; left: 6px; top: 4px; width: 14px; border-radius: 50%; background: #333; text-align: center; font-size: 9px; line-height: 14px; }
.tray::after { content: ""; position: absolute; right: 2px; top: 0; bottom: 0; border-left: 1px solid #8a93a0; }
.watermark { position: absolute; right: 16px; top: 3px; font: 20px/24px "Noto Sans CJK SC", sans-serif; color: rgba(200, 203, 210, .75); white-space: nowrap; }
```
